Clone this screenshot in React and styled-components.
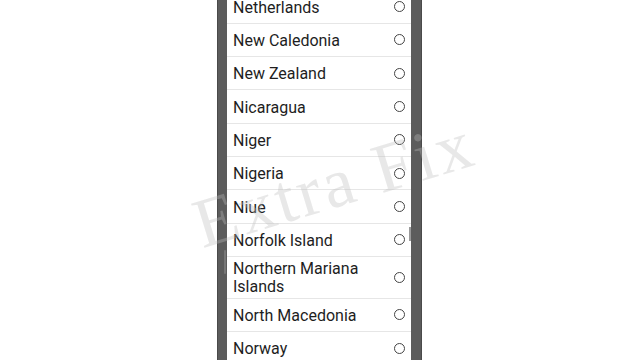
import React from "react";
import styled, { createGlobalStyle } from "styled-components";

const Global = createGlobalStyle`
  html, body { margin: 0; padding: 0; background: #fff; }
  body { width: 640px; height: 360px; overflow: hidden; font-family: Roboto, "Noto Sans", sans-serif; }
`;

const Page = styled.div`
  position: relative;
  width: 640px;
  height: 360px;
  overflow: hidden;
  background: #fff;
  display: flex;
  justify-content: flex-start;
`;

const Phone = styled.div`
  margin-left: 217px;
  width: 205px;
  height: 360px;
  display: flex;
  background: #575757;
  box-sizing: border-box;
  border-left: 1px solid #4a4a4a;
  border-right: 1px solid #4a4a4a;
`;

const Bezel = styled.div`
  width: ${(p) => p.$w}px;
  flex: none;
  background: #5c5c5c;
  position: relative;
`;

const BezelMark = styled.div`
  position: absolute;
  left: 6px;
  top: 250px;
  width: 2px;
  height: 24px;
  background: #777;
  border-radius: 1px;
`;

const List = styled.div`
  position: relative;
  flex: 1;
  background: #fff;
  margin-top: -9.5px;
  display: flex;
  flex-direction: column;
`;

const Row = styled.div`
  min-height: 33.33px;
  box-sizing: border-box;
  padding: 1.3px 6px 1.3px 6px;
  display: flex;
  align-items: center;
  justify-content: space-between;
  border-bottom: 1px solid #e6e6e6;
  flex: none;
`;

const Label = styled.span`
  font-family: Roboto, "Noto Sans", sans-serif;
  font-size: 16px;
  line-height: 18px;
  padding-top: 2px;
  color: #1e1e1e;
  max-width: 150px;
`;

const Radio = styled.span`
  width: 11px;
  height: 11px;
  box-sizing: border-box;
  border: 1.3px solid #444;
  border-radius: 50%;
  flex: none;
`;

const Scroll = styled.div`
  position: absolute;
  right: 0;
  top: 236px;
  width: 2px;
  height: 14px;
  background: #9a9a9a;
`;

const Watermark = styled.div`
  position: absolute;
  left: 184px;
  top: 188px;
  font-family: "Liberation Serif", "DejaVu Serif", serif;
  font-size: 70px;
  color: rgba(190, 190, 190, 0.35);
  transform: rotate(-17deg);
  transform-origin: left top;
  white-space: nowrap;
  pointer-events: none;
  letter-spacing: 3px;
`;

const countries = [
  "Netherlands",
  "New Caledonia",
  "New Zealand",
  "Nicaragua",
  "Niger",
  "Nigeria",
  "Niue",
  "Norfolk Island",
  "Northern Mariana Islands",
  "North Macedonia",
  "Norway",
];

export default function App() {
  return (
    <Page>
      <Global />
      <Phone>
        <Bezel $w={9}>
          <BezelMark />
        </Bezel>
        <List>
          {countries.map((c) => (
            <Row key={c}>
              <Label>{c}</Label>
              <Radio />
            </Row>
          ))}
          <Scroll />
        </List>
        <Bezel $w={10} />
      </Phone>
      <Watermark>Extra Fix</Watermark>
    </Page>
  );
}
